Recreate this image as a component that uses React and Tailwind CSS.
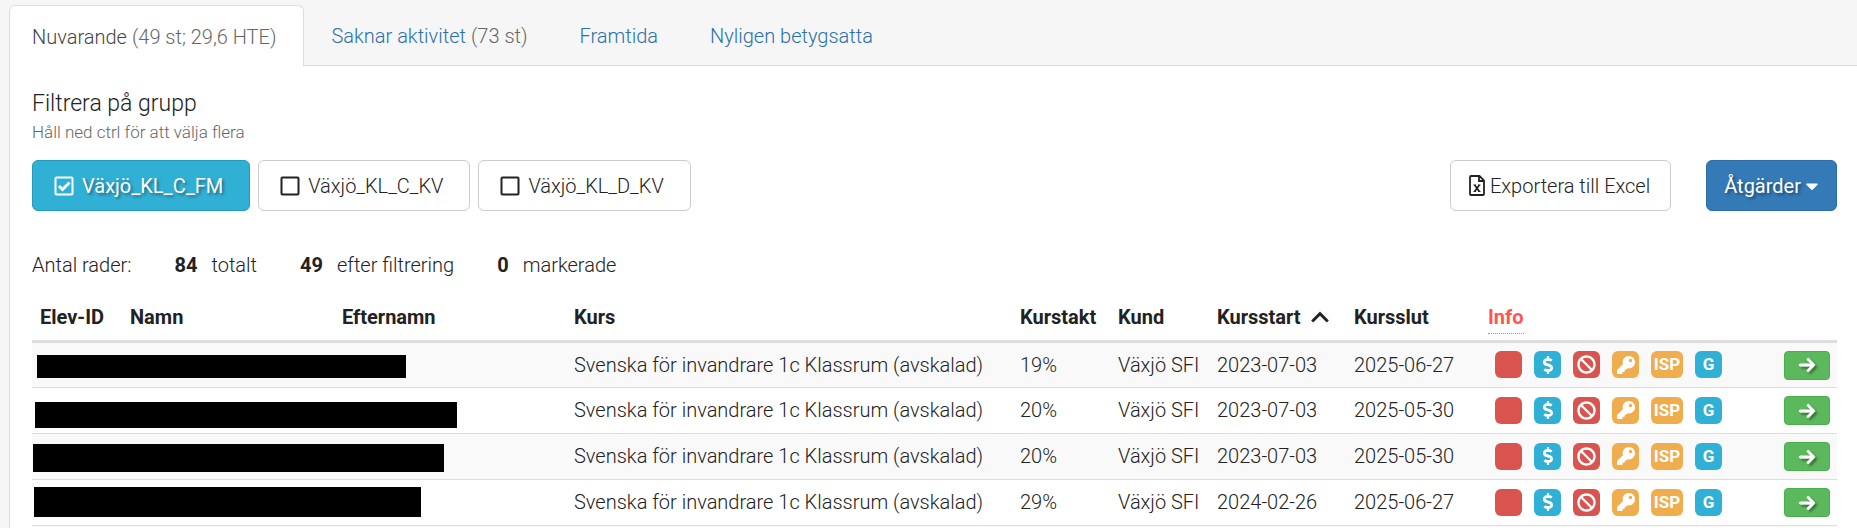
import React, { useState } from 'react';
import { FaBan, FaCaretDown, FaDollarSign, FaKey } from 'react-icons/fa';
import { FaArrowRight } from 'react-icons/fa6';

const tabs = [
  { name: 'Nuvarande', count: '(49 st; 29,6 HTE)', active: true },
  { name: 'Saknar aktivitet', count: '(73 st)' },
  { name: 'Framtida' },
  { name: 'Nyligen betygsatta' },
];

const groups = ['Växjö_KL_C_FM', 'Växjö_KL_C_KV', 'Växjö_KL_D_KV'];

const rows = [
  { pace: '19%', start: '2023-07-03', end: '2025-06-27', mask: 'ml-[5px] mt-[12px] h-[23px] w-[369px]' },
  { pace: '20%', start: '2023-07-03', end: '2025-05-30', mask: 'ml-[3px] mt-[14px] h-[26px] w-[422px]' },
  { pace: '20%', start: '2023-07-03', end: '2025-05-30', mask: 'ml-[1px] mt-[10px] h-[28px] w-[411px]' },
  { pace: '29%', start: '2024-02-26', end: '2025-06-27', mask: 'ml-[2px] mt-[7px] h-[30px] w-[387px]' },
];

const CheckIcon = ({ checked }) => (
  <svg viewBox="0 0 20 20" className="w-5 h-5" fill="none" stroke="currentColor" strokeWidth="2" aria-hidden="true">
    <rect x="1.5" y="1.5" width="17" height="17" rx="1" />
    {checked && <path d="M5 10l3.5 3.5L15.5 6.5" strokeWidth="3" />}
  </svg>
);

const ExcelIcon = () => (
  <svg viewBox="0 0 16 21" className="w-4 h-[21px]" fill="none" stroke="currentColor" strokeWidth="1.8" aria-hidden="true">
    <path d="M1 2a1 1 0 0 1 1-1h8.5L15 5.5V19a1 1 0 0 1-1 1H2a1 1 0 0 1-1-1z" />
    <path d="M10 1v5h5" />
    <path d="M5.7 10l4.6 6.5M10.3 10l-4.6 6.5" />
    <path d="M4.5 10h2.5M9 10h2.5M4.5 16.5h2.5M9 16.5h2.5" strokeWidth="1.2" />
  </svg>
);

const SortIcon = () => (
  <svg viewBox="0 0 18 12" className="w-[18px] h-3" fill="none" stroke="currentColor" strokeWidth="3" aria-hidden="true">
    <path d="M1.2 10.5L9 2.7l7.8 7.8" />
  </svg>
);

const Badge = ({ color, label, children }) => (
  <span aria-label={label} className={`inline-flex items-center justify-center h-[27px] min-w-[27px] rounded-md text-white text-[17px] leading-none font-bold ${color}`}>
    {children}
  </span>
);

const App = () => {
  const [selected, setSelected] = useState(['Växjö_KL_C_FM']);

  const toggle = (group) => setSelected((prev) => (prev.includes(group) ? prev.filter((g) => g !== group) : [...prev, group]));

  return (
    <div className="min-h-screen bg-[#f6f6f6] pl-[9px] pt-[5px] font-['Roboto',sans-serif] font-light text-xl leading-7 text-[#222] flex flex-col">
      <nav className="flex gap-[2px] border-b border-[#ddd] h-[61px]">
        {tabs.map((tab) => (
          <a
            key={tab.name}
            href="#"
            className={`flex items-center pt-[2px] gap-[5px] whitespace-nowrap border ${tab.active ? 'h-[61px] pl-[22px] pr-[27px] bg-white border-b-0 border-[#ddd] rounded-t-md text-[#444]' : 'h-[60px] px-6 border-transparent text-[#2a70ad]'}`}
          >
            {tab.name} {tab.count && <span className="text-[#666]">{tab.count}</span>}
          </a>
        ))}
      </nav>

      <main className="flex-1 bg-white border-l border-[#ddd] pl-[22px] pr-5 pt-[22px]">
        <h4 className="text-[23px] leading-8">Filtrera på grupp</h4>
        <p className="text-[17px] leading-6 text-[#666]">Håll ned ctrl för att välja flera</p>

        <div className="flex items-center justify-between mt-4">
          <div className="flex gap-2">
            {groups.map((group) => {
              const checked = selected.includes(group);
              return (
                <button
                  key={group}
                  onClick={() => toggle(group)}
                  aria-pressed={checked}
                  className={`flex items-center gap-2 h-[51px] pl-[21px] pr-[26px] rounded-md border ${checked ? 'bg-[#31b0d5] border-[#269abc] text-white font-normal text-shadow-[2px_2px_3px_rgba(0,0,0,0.4)]' : 'bg-white border-[#ccc]'}`}
                >
                  <CheckIcon checked={checked} /> {group}
                </button>
              );
            })}
          </div>
          <div className="flex gap-[35px]">
            <button className="flex items-center gap-[5px] h-[51px] pl-[18px] pr-5 bg-white border border-[#ccc] rounded-md">
              <ExcelIcon /> Exportera till Excel
            </button>
            <button className="flex items-center gap-1 h-[51px] px-[17px] bg-[#337ab7] border border-[#2e6da4] rounded-md text-white font-normal text-shadow-[2px_2px_3px_rgba(0,0,0,0.4)]">
              Åtgärder <FaCaretDown className="w-[14px]" />
            </button>
          </div>
        </div>

        <div className="flex mt-10 gap-[43px]">
          <span>Antal rader:</span>
          <span><b className="mr-[14px] font-bold">84</b>totalt</span>
          <span><b className="mr-[14px] font-bold">49</b>efter filtrering</span>
          <span><b className="mr-[14px] font-bold">0</b>markerade</span>
        </div>

        <table className="w-full mt-4 table-fixed text-left whitespace-nowrap">
          <colgroup>
            <col className="w-[90px]" />
            <col className="w-[212px]" />
            <col className="w-[232px]" />
            <col className="w-[446px]" />
            <col className="w-[98px]" />
            <col className="w-[99px]" />
            <col className="w-[137px]" />
            <col className="w-[134px]" />
            <col className="w-[260px]" />
            <col />
          </colgroup>
          <thead>
            <tr className="h-[46px] border-b-3 border-[#ddd] *:px-2 *:font-bold">
              <th>Elev-ID</th>
              <th>Namn</th>
              <th>Efternamn</th>
              <th>Kurs</th>
              <th>Kurstakt</th>
              <th>Kund</th>
              <th><span className="flex items-center gap-[10px]">Kursstart <SortIcon /></span></th>
              <th>Kursslut</th>
              <th className="text-[#ff5555]"><abbr title="Info" className="no-underline border-b border-dotted border-[#999] pb-1">Info</abbr></th>
              <th aria-label="Öppna" />
            </tr>
          </thead>
          <tbody>
            {rows.map((row, i) => (
              <tr key={i} className="h-[46px] border-b border-[#ddd] odd:bg-[#f9f9f9]">
                <td colSpan={3} className="align-top"><div className={`bg-black ${row.mask}`} /></td>
                <td className="px-2">Svenska för invandrare 1c Klassrum (avskalad)</td>
                <td className="px-2">{row.pace}</td>
                <td className="px-2">Växjö SFI</td>
                <td className="px-2">{row.start}</td>
                <td className="px-2">{row.end}</td>
                <td className="pl-[15px]">
                  <div className="flex gap-3">
                    <Badge color="bg-[#d9534f]" label="Varning" />
                    <Badge color="bg-[#31b0d5]" label="Betalning"><FaDollarSign className="w-[18px] h-[18px]" /></Badge>
                    <Badge color="bg-[#d9534f]" label="Spärrad"><FaBan className="w-[19px] h-[19px]" /></Badge>
                    <Badge color="bg-[#f0ad4e]" label="Nyckel"><FaKey className="w-[18px] h-[18px]" /></Badge>
                    <Badge color="bg-[#f0ad4e] w-8">ISP</Badge>
                    <Badge color="bg-[#31b0d5]">G</Badge>
                  </div>
                </td>
                <td className="pr-[7px] text-right">
                  <button aria-label="Öppna elev" className="inline-flex items-center justify-center align-middle w-[46px] h-[29px] bg-[#5cb85c] border border-[#4cae4c] rounded text-white">
                    <FaArrowRight stroke="currentColor" strokeWidth="24" className="w-[18px] h-[18px] drop-shadow-[2px_2px_1px_rgba(0,0,0,0.4)]" />
                  </button>
                </td>
              </tr>
            ))}
          </tbody>
          <tfoot>
            <tr className="bg-[#f9f9f9]"><td colSpan={10} className="h-[2px]" /></tr>
          </tfoot>
        </table>
      </main>
    </div>
  );
};

export default App;
